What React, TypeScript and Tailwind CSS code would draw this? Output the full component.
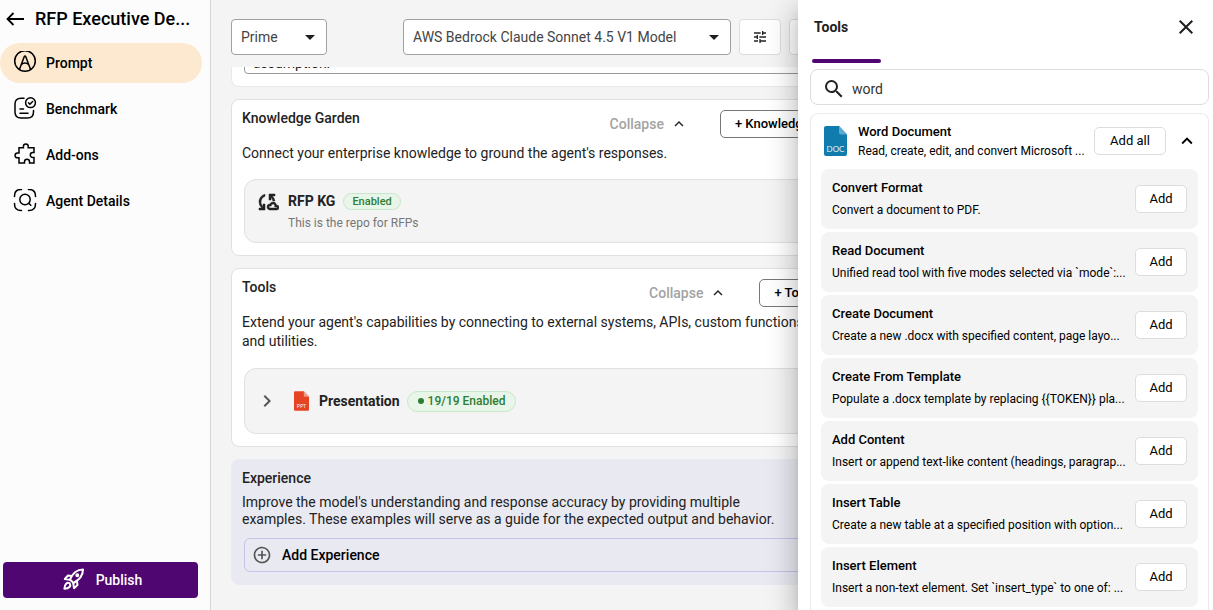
import type { ReactNode } from "react";
import {
  MdAddCircleOutline,
  MdArrowDropDown,
  MdClose,
  MdKeyboardArrowRight,
  MdKeyboardArrowUp,
  MdOutlineCloudSync,
  MdSearch,
  MdTune,
} from "react-icons/md";

const tools = [
  { name: "Convert Format", description: "Convert a document to PDF." },
  { name: "Read Document", description: "Unified read tool with five modes selected via `mode`:..." },
  { name: "Create Document", description: "Create a new .docx with specified content, page layo..." },
  { name: "Create From Template", description: "Populate a .docx template by replacing {{TOKEN}} pla..." },
  { name: "Add Content", description: "Insert or append text-like content (headings, paragrap..." },
  { name: "Insert Table", description: "Create a new table at a specified position with option..." },
  { name: "Insert Element", description: "Insert a non-text element. Set `insert_type` to one of: ..." },
];

const strokeProps = {
  viewBox: "0 1 24 24",
  fill: "none",
  stroke: "currentColor",
  strokeWidth: 1.5,
  strokeLinecap: "round" as const,
  strokeLinejoin: "round" as const,
};

const PromptIcon = () => (
  <svg {...strokeProps} className="size-6 shrink-0">
    <circle cx="12" cy="11" r="10.3" />
    <path d="M6.5 19.300 11.2 6.8Q12 5 12.8 6.8L17.500 19.300M8.500 14.500Q12 11.500 15.500 14.500" />
  </svg>
);

const BenchmarkIcon = () => (
  <svg {...strokeProps} className="size-6 shrink-0">
    <path d="M11 2.2H8Q2 2.2 2 8v8q0 6 6 6h6.500q6 0 6-6v-1.500" />
    <circle cx="17.500" cy="6.700" r="4.900" />
    <path d="m15.500 6.800 1.400 1.400 2.700-2.700M7 13h3.500M7 17.200h8" />
  </svg>
);

const AddonsIcon = () => (
  <svg {...strokeProps} strokeLinejoin="miter" className="size-6 shrink-0">
    <path d="M6 5.800h4.400V4.500a2.400 2.400 0 0 1 4.800 0v1.300H21v4.700h-1.200a2.500 2.500 0 0 0 0 5H21V21h-4.500v-1.200a2.500 2.500 0 0 0-5 0V21H6v-5.200H4.500a2.400 2.400 0 0 1 0-4.800H6Z" />
  </svg>
);

const DetailsIcon = () => (
  <svg {...strokeProps} className="size-6 shrink-0">
    <path d="M1.500 8.500V8Q1.500 1.500 8 1.500h.5M15.500 1.500h.5q6.500 0 6.500 6.500v.5M22.500 15.500v.5q0 6.500-6.500 6.500h-.5M8.500 22.500H8q-6.500 0-6.500-6.500v-.5" />
    <circle cx="12" cy="11.500" r="5.200" />
    <path d="m16 15.500 1.800 1.700" />
  </svg>
);

const RocketIcon = () => (
  <svg {...strokeProps} strokeWidth={2} className="size-6 shrink-0">
    <path d="M8 12.500C10.500 6.500 14.500 2.500 21 2.500c0 6.500-4 10.500-9.500 13.500Z" />
    <path d="M9.500 9 6 8.500 2.800 12 8 12.800M15 14.500l.5 3.500-3.500 3.200-.8-5.200" />
    <path d="M7.500 16.200c-2.200-1.200-5 .6-5.100 5.600 5-.1 6.700-2.900 5.500-5.100" />
    <circle cx="15.300" cy="8.300" r="1" fill="currentColor" />
  </svg>
);

type FileIconProps = { label: string; color: string; fold: string; className: string };

const FileIcon = ({ label, color, fold, className }: FileIconProps) => (
  <svg viewBox="0 0 23 30" className={className}>
    <path fill={color} d="M2 0h13l8 8.500V28q0 2-2 2H2q-2 0-2-2V2Q0 0 2 0Z" />
    <path fill={fold} d="M15 0l8 8.500h-6q-2 0-2-2Z" />
    <text x="11.500" y="25.500" textAnchor="middle" fontSize="8" fill="#e6f1f7" fontFamily="Lato, sans-serif">
      {label}
    </text>
  </svg>
);

const NavItem = ({ icon, label, active }: { icon: ReactNode; label: string; active?: boolean }) => (
  <a
    href="#"
    className={
      active
        ? "flex h-10 items-center gap-[9px] rounded-full bg-[#fde9d0] pl-[13px] font-medium"
        : "flex h-10 items-center gap-[9px] rounded-full pl-[13px] font-medium"
    }
  >
    {icon}
    {label}
  </a>
);

const Sidebar = () => (
  <aside className="flex w-[211px] shrink-0 flex-col border-r border-[#d6d6d6] bg-[#fcfcfc] text-sm text-black">
    <div className="flex h-[38px] items-center gap-[11px] pl-1.5">
      <button aria-label="Back">
        <svg viewBox="0 0 18 14" className="h-3.5 w-[18px]" fill="none" stroke="currentColor" strokeWidth="1.8">
          <path d="M18 7H1.500M7.500 1 1.500 7l6 6" />
        </svg>
      </button>
      <h1 className="text-lg font-medium whitespace-nowrap">RFP Executive De...</h1>
    </div>
    <nav className="mt-[5px] flex flex-col gap-1.5 pr-2">
      <NavItem icon={<PromptIcon />} label="Prompt" active />
      <NavItem icon={<BenchmarkIcon />} label="Benchmark" />
      <NavItem icon={<AddonsIcon />} label="Add-ons" />
      <NavItem icon={<DetailsIcon />} label="Agent Details" />
    </nav>
    <button className="mt-auto mr-3 mb-3 ml-[3px] flex h-9 items-center justify-center gap-2.5 rounded bg-[#4f0670] pl-[3px] font-medium text-white">
      <RocketIcon />
      Publish
    </button>
  </aside>
);

const Dropdown = ({ label, value, className }: { label: string; value: string; className: string }) => (
  <div className={`relative shrink-0 ${className}`}>
    <select
      aria-label={label}
      className="h-9 w-full appearance-none rounded border border-[#a0a0a0] bg-white pl-[9px] text-sm text-[#444]"
    >
      <option>{value}</option>
    </select>
    <MdArrowDropDown className="pointer-events-none absolute top-1.5 right-[5px] size-6 text-[#1f1f1f]" />
  </div>
);

type CardProps = { title: string; action: string; description: string; children: ReactNode };

const Card = ({ title, action, description, children }: CardProps) => (
  <section className="rounded-lg border border-[#e0e0e0] bg-white px-2.5 pb-3">
    <div className="flex h-11 items-start justify-between">
      <h2 className="mt-2 font-medium">{title}</h2>
      <div className="mt-2.5 mr-[11px] flex items-center">
        <button className="flex items-center gap-1.5 font-medium text-[#a3a3a3]">
          Collapse
          <MdKeyboardArrowUp className="size-[18px] text-[#222]" />
        </button>
        <button className="ml-8 h-7 rounded-[5px] border border-[#777] px-3.5 text-[13px] font-medium text-black">
          {action}
        </button>
      </div>
    </div>
    <p className="max-w-[576px] leading-[19px]">{description}</p>
    {children}
  </section>
);

const Main = () => (
  <main className="flex min-w-0 flex-1 flex-col overflow-hidden bg-[#f4f4f4] px-5 text-sm text-[#222]">
    <div className="flex h-[67px] shrink-0 items-center gap-2 pt-[7px]">
      <Dropdown label="Mode" value="Prime" className="mr-[68px] w-24" />
      <Dropdown label="Model" value="AWS Bedrock Claude Sonnet 4.5 V1 Model" className="w-[328px]" />
      <button aria-label="Model settings" className="flex h-9 w-[42px] shrink-0 items-center justify-center rounded border border-[#ddd] bg-white">
        <MdTune className="size-4" />
      </button>
      <button aria-label="More" className="h-9 w-[42px] shrink-0 rounded border border-[#ddd] bg-white" />
    </div>
    <div className="flex min-h-0 w-16/25 flex-1 flex-col overflow-hidden">
      {/* tail of the instructions card, scrolled under the toolbar */}
      <div className="flex h-5 shrink-0 flex-col justify-end overflow-hidden rounded-b-lg border border-t-0 border-[#e8e8e8] bg-white px-3 pb-3">
        <div className="rounded-b border border-[#999] px-2 pb-px leading-[17px]">assumption.</div>
      </div>
      <div className="mt-3 flex flex-col gap-3">
        <Card
          title="Knowledge Garden"
          action="+ Knowledge"
          description="Connect your enterprise knowledge to ground the agent's responses."
        >
          <div className="mt-4 ml-0.5 flex h-16 items-start rounded-xl border border-[#e0e0e0] bg-[#f4f4f4] pt-2.5 pl-2.5">
            <MdOutlineCloudSync className="size-6 [&>path:first-child]:stroke-none" strokeWidth={0.5} />
            <div className="ml-[9px] pt-px">
              <div className="flex items-center gap-2">
                <span className="leading-5 font-bold">RFP KG</span>
                <span className="rounded-full border border-[#c8e6c9] bg-[#e8f5e9] px-2 text-[11px] leading-[15px] font-medium text-[#2e7d32]">
                  Enabled
                </span>
              </div>
              <p className="text-xs leading-6 text-[#777]">This is the repo for RFPs</p>
            </div>
          </div>
        </Card>
        <Card
          title="Tools"
          action="+ Tool"
          description="Extend your agent's capabilities by connecting to external systems, APIs, custom functions, and utilities."
        >
          <div className="mt-[17px] ml-0.5 flex h-[66px] items-center rounded-xl border border-[#e0e0e0] bg-[#f4f4f4] pl-2.5">
            <button aria-label="Expand Presentation">
              <MdKeyboardArrowRight className="size-6 text-[#555]" />
            </button>
            <FileIcon label="PPT" color="#e54322" fold="#f09d8a" className="ml-[15px] h-5 w-[15px]" />
            <span className="ml-2.5 font-bold">Presentation</span>
            <span className="ml-[7px] flex items-center gap-1 rounded-full border border-[#c8e6c9] bg-[#e8f5e9] px-2.5 text-xs leading-[19px] font-medium text-[#2e7d32]">
              <span className="size-1.5 rounded-full bg-[#2e7d32]" />
              19/19 Enabled
            </span>
          </div>
        </Card>
        <section className="rounded-lg border border-[#eaeaf2] bg-[#e9e9f2] px-2.5 pt-2 pb-3">
          <h2 className="leading-5 font-medium">Experience</h2>
          <p className="mt-1.5 max-w-[560px] leading-[17px]">
            Improve the model's understanding and response accuracy by providing multiple examples. These examples will
            serve as a guide for the expected output and behavior.
          </p>
          <div className="mt-2.5 pl-0.5">
            <button className="flex h-[34px] w-full items-center gap-2.5 rounded-md border border-[#c5c3e8] pl-[7px] font-medium text-black">
              <MdAddCircleOutline className="size-5 text-[#555]" />
              Add Experience
            </button>
          </div>
        </section>
      </div>
    </div>
  </main>
);

const ToolsDrawer = () => (
  <aside className="absolute inset-y-0 right-0 flex w-[415px] flex-col overflow-hidden bg-white text-black shadow-[0_8px_10px_-5px_rgba(0,0,0,0.2),0_16px_24px_2px_rgba(0,0,0,0.14),0_6px_30px_5px_rgba(0,0,0,0.12)]">
    <header className="flex h-[59px] shrink-0 items-start justify-between pt-[15px] pr-[15px] pl-4">
      <h2 className="text-sm leading-6 font-bold text-[#222]">Tools</h2>
      <button aria-label="Close">
        <MdClose className="size-6 text-[#1f1f1f]" />
      </button>
    </header>
    <div className="ml-3.5 h-1 w-[69px] shrink-0 rounded-sm bg-[#4f0670]" />
    <div className="mt-1.5 mr-1 ml-3 flex h-9 shrink-0 items-center gap-1.5 rounded-lg border border-[#ddd] pt-[3px] pl-[11px]">
      <MdSearch className="size-6 text-[#222]" />
      <input
        type="text"
        aria-label="Search tools"
        defaultValue="word"
        className="min-w-0 flex-1 text-sm text-[#333] outline-none"
      />
    </div>
    <div className="mt-2 mr-1 ml-3 min-h-0 flex-1 overflow-hidden rounded-t-lg border border-b-0 border-[#ebebeb] px-2.5">
      <div className="mb-0.5 flex h-[53px] items-center pl-[3px]">
        <FileIcon label="DOC" color="#107cad" fold="#5ba9d6" className="h-[30px] w-[23px] shrink-0" />
        <div className="ml-[11px] min-w-0 flex-1 pt-0.5 whitespace-nowrap">
          <h3 className="text-[13px] leading-[19px] font-medium">Word Document</h3>
          <p className="text-xs leading-5">Read, create, edit, and convert Microsoft ...</p>
        </div>
        <button className="h-7 w-[72px] rounded-[5px] border border-[#ddd] text-[13px]">Add all</button>
        <button aria-label="Collapse Word Document" className="ml-2.5">
          <MdKeyboardArrowUp className="size-[22px]" />
        </button>
      </div>
      <ul className="flex flex-col gap-[3px]">
        {tools.map((tool) => (
          <li key={tool.name} className="flex h-[60px] shrink-0 items-center rounded-lg bg-[#f4f4f4] px-[11px]">
            <div className="flex min-w-0 flex-1 flex-col gap-0.5 whitespace-nowrap">
              <h4 className="text-[13px] leading-[21px] font-medium">{tool.name}</h4>
              <p className="text-xs leading-[21px]">{tool.description}</p>
            </div>
            <button className="h-7 w-[52px] rounded-[5px] border border-[#ddd] bg-white text-[13px]">Add</button>
          </li>
        ))}
      </ul>
    </div>
  </aside>
);

const App = () => {
  return (
    <div className="relative flex h-screen overflow-hidden font-[Roboto,sans-serif]">
      <Sidebar />
      <Main />
      <ToolsDrawer />
    </div>
  );
};

export default App;
